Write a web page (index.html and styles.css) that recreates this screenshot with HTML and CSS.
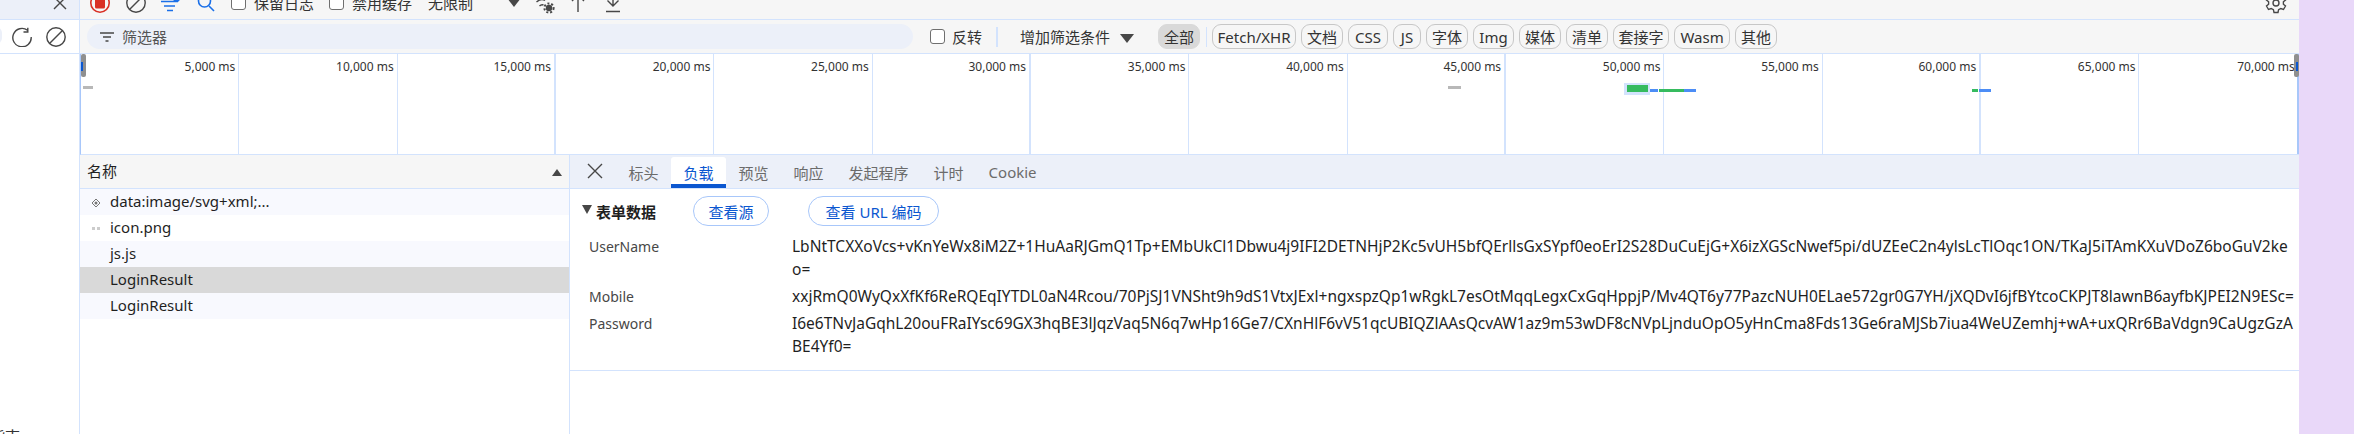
FILE: index.html
```html
<!DOCTYPE html>
<html lang="zh-CN">
<head>
<meta charset="utf-8">
<title>网络</title>
<link rel="stylesheet" href="styles.css">
</head>
<body>
<div class="app">
  <aside class="side">
    <div class="side-top">
      <svg class="side-close" width="16" height="16" viewBox="0 0 16 16"><path d="M2 2 14 14M14 2 2 14" class="st-dark"/></svg>
    </div>
    <div class="side-tools">
      <span class="side-pill"></span>
      <svg class="ic-reload" width="20" height="20" viewBox="0 0 20 20"><path d="M15.5 3.2A9.2 9.2 0 1 0 19.2 10M15.8 0.8V5H11.5" class="st-dark"/></svg>
      <svg class="ic-clear2" width="20" height="20" viewBox="0 0 20 20"><circle cx="10" cy="10" r="9.2" class="st-dark"/><path d="M3.5 16.5 16.5 3.5" class="st-dark"/></svg>
    </div>
    <div class="side-foot">指南</div>
  </aside>

  <main class="main">
    <div class="bar bar-one">
      <svg class="ic-record" width="20" height="20" viewBox="0 0 20 20"><circle cx="10" cy="10" r="9.2" class="st-red"/><rect x="5" y="4.5" width="10" height="11" rx="1.5" class="fill-red"/></svg>
      <svg class="ic-clear" width="20" height="20" viewBox="0 0 20 20"><circle cx="10" cy="10" r="9.2" class="st-dark"/><path d="M3.5 16.5 16.5 3.5" class="st-dark"/></svg>
      <svg class="ic-filter" width="20" height="20" viewBox="0 0 20 20"><path d="M0 8.500H17M3 13H14M6 17.500H12" class="st-bright"/><circle cx="15.500" cy="5.500" r="3.500" class="fill-bright"/></svg>
      <svg class="ic-search" width="18" height="20" viewBox="0 0 18 20"><circle cx="7.5" cy="8" r="6" class="st-bright"/><path d="M12 13 17 18" class="st-bright"/></svg>
      <span class="check check-a"></span><span class="lbl lbl-a">保留日志</span>
      <span class="check check-b"></span><span class="lbl lbl-b">禁用缓存</span>
      <span class="lbl lbl-c">无限制</span>
      <span class="tri tri-a"></span>
      <svg class="ic-wifi" width="22" height="22" viewBox="0 0 22 22"><path d="M0.500 6C5 2 10 2 14 5.500M3.500 10C7 7 10 7 12 8.500M6.500 14C8 12.500 9.500 12.500 10.500 13" class="st-dark"/><circle cx="16" cy="16" r="3.200" class="fill-dark"/><circle cx="16" cy="16" r="4.600" class="st-dash"/></svg>
      <svg class="ic-up" width="14" height="20" viewBox="0 0 14 20"><path d="M7 19V2M1 8 7 2 13 8" class="st-dark"/></svg>
      <svg class="ic-down" width="14" height="20" viewBox="0 0 14 20"><path d="M7 0V13M1.500 7.500 7 13 12.500 7.500M0 18.500H14" class="st-dark"/></svg>
      <svg class="ic-gear" width="22" height="22" viewBox="0 0 22 22"><path d="M9 1.500H13L13.600 4.300 15.800 5.500 18.500 4.500 20.500 8 18.400 9.800V12.200L20.500 14 18.500 17.500 15.800 16.500 13.600 17.700 13 20.500H9L8.400 17.700 6.200 16.500 3.500 17.500 1.500 14 3.600 12.200V9.800L1.500 8 3.500 4.500 6.200 5.500 8.400 4.300Z" class="st-dark"/><circle cx="11" cy="11" r="3" class="st-dark"/></svg>
    </div>

    <div class="bar bar-two">
      <div class="filter-input">
        <svg width="14" height="10" viewBox="0 0 14 10"><path d="M0 1H14M3 5H11M5.500 9H8.500" class="st-gray"/></svg>
        <span>筛选器</span>
      </div>
      <span class="check check-c"></span><span class="lbl lbl-d">反转</span>
      <span class="vsep vsep-a"></span>
      <span class="lbl lbl-e">增加筛选条件</span>
      <span class="tri tri-b"></span>
      <span class="chip chip-on">全部</span>
      <span class="vsep vsep-b"></span>
      <div class="chips">
        <span class="chip chip-fetch">Fetch/XHR</span>
        <span class="chip">文档</span>
        <span class="chip chip-css">CSS</span>
        <span class="chip chip-js">JS</span>
        <span class="chip">字体</span>
        <span class="chip chip-img">Img</span>
        <span class="chip">媒体</span>
        <span class="chip">清单</span>
        <span class="chip chip-ws">套接字</span>
        <span class="chip chip-wasm">Wasm</span>
        <span class="chip">其他</span>
      </div>
    </div>

    <div class="overview">
      <div class="tick"><span>5,000 ms</span></div>
      <div class="tick"><span>10,000 ms</span></div>
      <div class="tick"><span>15,000 ms</span></div>
      <div class="tick"><span>20,000 ms</span></div>
      <div class="tick"><span>25,000 ms</span></div>
      <div class="tick"><span>30,000 ms</span></div>
      <div class="tick"><span>35,000 ms</span></div>
      <div class="tick"><span>40,000 ms</span></div>
      <div class="tick"><span>45,000 ms</span></div>
      <div class="tick"><span>50,000 ms</span></div>
      <div class="tick"><span>55,000 ms</span></div>
      <div class="tick"><span>60,000 ms</span></div>
      <div class="tick"><span>65,000 ms</span></div>
      <div class="tick"><span>70,000 ms</span></div>
      <i class="handle handle-l"></i>
      <i class="handle handle-r"></i>
      <i class="seg dash-a"></i>
      <i class="seg dash-b"></i>
      <i class="seg halo"></i>
      <i class="seg green-big"></i>
      <i class="seg blue-a"></i>
      <i class="seg green-a"></i>
      <i class="seg blue-b"></i>
      <i class="seg green-b"></i>
      <i class="seg blue-c"></i>
    </div>

    <div class="split">
      <section class="reqs">
        <header class="reqs-head"><span>名称</span><span class="tri-up"></span></header>
        <div class="req req-odd">
          <svg class="req-ic" width="8" height="8" viewBox="0 0 8 8"><path d="M0 4 4 0 8 4 4 8Z" class="st-thin"/><circle cx="4" cy="4" r="1.500" class="fill-gray"/></svg>
          <span>data:image/svg+xml;...</span>
        </div>
        <div class="req">
          <svg class="req-ic" width="8" height="4" viewBox="0 0 8 4"><rect width="3" height="3" class="fill-light"/><rect x="5" width="3" height="3" class="fill-light"/></svg>
          <span>icon.png</span>
        </div>
        <div class="req req-odd"><span class="req-noic">js.js</span></div>
        <div class="req req-sel"><span class="req-noic">LoginResult</span></div>
        <div class="req req-odd"><span class="req-noic">LoginResult</span></div>
      </section>

      <section class="detail">
        <nav class="tabs">
          <svg class="tabs-close" width="16" height="16" viewBox="0 0 16 16"><path d="M1 1 15 15M15 1 1 15" class="st-dark"/></svg>
          <span class="tab">标头</span>
          <span class="tab tab-on">负载</span>
          <span class="tab">预览</span>
          <span class="tab">响应</span>
          <span class="tab">发起程序</span>
          <span class="tab">计时</span>
          <span class="tab">Cookie</span>
        </nav>
        <div class="form">
          <div class="form-head">
            <span class="tri tri-c"></span>
            <strong>表单数据</strong>
            <span class="pill pill-a">查看源</span>
            <span class="pill pill-b">查看 URL 编码</span>
          </div>
          <div class="kv">
            <span class="k">UserName</span>
            <span class="v">LbNtTCXXoVcs+vKnYeWx8iM2Z+1HuAaRJGmQ1Tp+EMbUkCl1Dbwu4j9IFI2DETNHjP2Kc5vUH5bfQErllsGxSYpf0eoErI2S28DuCuEjG+X6izXGScNwef5pi/dUZEeC2n4ylsLcTlOqc1ON/TKaJ5iTAmKXuVDoZ6boGuV2ke<br>o=</span>
          </div>
          <div class="kv">
            <span class="k">Mobile</span>
            <span class="v">xxjRmQ0WyQxXfKf6ReRQEqIYTDL0aN4Rcou/70PjSJ1VNSht9h9dS1VtxJExl+ngxspzQp1wRgkL7esOtMqqLegxCxGqHppjP/Mv4QT6y77PazcNUH0ELae572gr0G7YH/jXQDvI6jfBYtcoCKPJT8lawnB6ayfbKJPEI2N9ESc=</span>
          </div>
          <div class="kv">
            <span class="k">Password</span>
            <span class="v">I6e6TNvJaGqhL20ouFRaIYsc69GX3hqBE3lJqzVaq5N6q7wHp16Ge7/CXnHlF6vV51qcUBIQZlAAsQcvAW1az9m53wDF8cNVpLjnduOpO5yHnCma8Fds13Ge6raMJSb7iua4WeUZemhj+wA+uxQRr6BaVdgn9CaUgzGzA<br>BE4Yf0=</span>
          </div>
        </div>
      </section>
    </div>
  </main>
</div>
</body>
</html>
```
FILE: styles.css
```css
* { box-sizing: border-box; }
html, body { margin: 0; height: 434px; overflow: hidden; }
body {
  background: #e9d8f9;
  color: #1f1f1f;
  font-family: "Noto Sans", "Noto Sans CJK SC", sans-serif;
  font-size: 14px;
}
.app { display: flex; width: 2299px; height: 448px; margin-top: -14px; background: #fff; }

/* stroke helpers */
svg { flex: none; display: block; fill: none; }
.st-dark { stroke: #474747; stroke-width: 1.4; fill: none; }
.st-dash { stroke: #474747; stroke-width: 2; stroke-dasharray: 2 1.900; fill: none; }
.st-red { stroke: #d93025; stroke-width: 1.6; fill: none; }
.st-bright { stroke: #1a6fe8; stroke-width: 1.6; fill: none; }
.st-gray { stroke: #474747; stroke-width: 1.5; fill: none; }
.st-thin { stroke: #777; stroke-width: 1; fill: none; }
.fill-red { fill: #d93025; }
.fill-bright { fill: #1a6fe8; }
.fill-dark { fill: #474747; }
.fill-gray { fill: #777; }
.fill-light { fill: #ccc; }

/* left gutter */
.side { width: 80px; flex: none; display: flex; flex-direction: column; border-right: 1px solid #d3e3fd; }
.side-top { height: 34px; background: #ecf0f9; border-bottom: 1px solid #d3e3fd; padding: 9px 0 0 52px; }
.side-tools { height: 34px; background: #fff; border-bottom: 1px solid #d3e3fd; display: flex; align-items: center; padding-left: 12px; position: relative; }
.side-pill { position: absolute; left: -10px; top: 7px; width: 12px; height: 17px; border-radius: 8px; background: #ecf0f9; }
.ic-clear2 { margin-left: 14px; }
.side-foot { margin-top: auto; margin-left: -10px; margin-bottom: -12px; font-size: 15px; line-height: 20px; white-space: nowrap; color: #333; }

.main { flex: 1; min-width: 0; display: flex; flex-direction: column; }

/* toolbars */
.bar { display: flex; align-items: center; height: 34px; flex: none; background: #f6f6f6; border-bottom: 1px solid #d3e3fd; font-size: 15px; white-space: nowrap; color: #333; }
.bar-one { padding-left: 10px; }
.ic-clear { margin-left: 16px; }
.ic-filter { margin-left: 15px; }
.ic-search { margin-left: 16px; }
.check { width: 15px; height: 15px; flex: none; border: 1.5px solid #6f6f6f; border-radius: 3px; background: #fff; }
.check-a { margin-left: 16px; }
.lbl-a { margin-left: 8px; }
.check-b { margin-left: 15px; }
.lbl-b { margin-left: 8px; }
.lbl-c { margin-left: 16px; }
.tri { width: 0; height: 0; flex: none; border-left: 7px solid transparent; border-right: 7px solid transparent; border-top: 9px solid #474747; }
.tri-a { margin-left: 34px; }
.ic-wifi { margin-left: 12px; }
.ic-up { margin-left: 16px; }
.ic-down { margin-left: 21px; }
.ic-gear { margin-left: auto; margin-right: 12px; }

.filter-input { width: 826px; height: 25px; margin-left: 7px; padding-left: 13px; display: flex; align-items: center; gap: 8px; background: #ecf0f9; border-radius: 12.500px; color: #555; flex: none; }
.check-c { margin-left: 17px; }
.lbl-d { margin-left: 7px; }
.vsep { width: 1px; height: 20px; flex: none; background: #d3e3fd; }
.vsep-a { margin-left: 14px; width: 2px; }
.lbl-e { margin-left: 22px; }
.tri-b { margin-left: 10px; margin-top: 3px; }
.chip { height: 25px; width: 42px; flex: none; display: flex; align-items: center; justify-content: center; border: 1px solid #c7c7c7; border-radius: 9px; background: #f6f6f6; font-size: 15px; }
.chip-on { margin-left: 24px; background: #d9d9d9; border-color: #d9d9d9; }
.vsep-b { margin-left: 6px; }
.chips { display: flex; gap: 5px; margin-left: 5px; }
.chip-fetch { width: 84px; }
.chip-css { width: 40px; }
.chip-js { width: 28px; }
.chip-img { width: 41px; }
.chip-ws { width: 56px; }
.chip-wasm { width: 56px; }

/* overview */
.overview { position: relative; height: 101px; flex: none; display: flex; background: #fff; border-bottom: 1px solid #d3e3fd; border-left: 1px solid #a8c7fa; }
.tick { width: 158.350px; flex: none; border-right: 1px solid #d3e3fd; text-align: right; padding: 4px 3px 0 0; font-size: 12px; line-height: 18px; color: #333; }
.tick:nth-child(3n) { border-right-width: 2px; }
.tick:last-of-type { border-right: 0; }
.overview::after { content: ""; position: absolute; right: 0; top: 0; bottom: 0; width: 2px; background: #a8c7fa; }
.handle { position: absolute; top: 0; width: 5px; height: 23px; background: #8f8f8f; border-radius: 2px; z-index: 1; }
.handle::after { content: ""; position: absolute; top: 8px; width: 2px; height: 9px; background: #0b57d0; }
.handle-l { left: 0; }
.handle-r { right: 0; }
.handle-r::after { left: 2px; }
.seg { position: absolute; display: block; }
.dash-a { left: 2px; top: 32px; width: 10px; height: 3px; background: #b8b8b8; }
.dash-b { left: 1367px; top: 32px; width: 13px; height: 3px; background: #b8b8b8; }
.halo { left: 1543px; top: 29px; width: 26px; height: 12px; background: #d3e3fd; }
.green-big { left: 1546px; top: 31px; width: 21px; height: 7px; background: #36bb5f; }
.blue-a { left: 1569px; top: 35px; width: 8px; height: 3px; background: #4c8df6; }
.green-a { left: 1578px; top: 35px; width: 25px; height: 3px; background: #36bb5f; }
.blue-b { left: 1603px; top: 35px; width: 12px; height: 3px; background: #4c8df6; }
.green-b { left: 1891px; top: 35px; width: 6px; height: 3px; background: #36bb5f; }
.blue-c { left: 1898px; top: 35px; width: 12px; height: 3px; background: #4c8df6; }

/* split */
.split { flex: 1; display: flex; min-height: 0; }
.reqs { width: 490px; flex: none; border-right: 1px solid #d3e3fd; font-size: 15px; }
.reqs-head { height: 34px; display: flex; align-items: center; justify-content: space-between; padding: 0 7px 2px 7px; background: #f6f6f6; border-bottom: 1px solid #d3e3fd; }
.tri-up { width: 0; height: 0; margin-top: 3px; border-left: 5px solid transparent; border-right: 5px solid transparent; border-bottom: 7px solid #474747; }
.req { height: 26px; display: flex; align-items: center; padding: 0 0 2px 12px; gap: 10px; background: #fff; white-space: nowrap; }
.req-odd { background: #f8f9fe; }
.req-sel { background: #d9d9d9; }
.req-ic { margin-top: 4px; }
.req-noic { margin-left: 18px; }

.detail { flex: 1; min-width: 0; }
.tabs { height: 34px; display: flex; align-items: flex-end; background: #ecf0f9; border-bottom: 1px solid #d3e3fd; font-size: 15px; color: #6b6b6b; }
.tabs-close { margin: 0 13px 9px 17px; }
.tab { height: 31px; padding: 5px 12.500px 0; white-space: nowrap; }
.tab-on { background: #fff; color: #0b57d0; border-bottom: 4px solid #0b57d0; border-radius: 3px 3px 0 0; }
.form { padding: 7px 0 12px 0; border-bottom: 1px solid #d3e3fd; background: #fff; font-size: 14px; }
.form-head { display: flex; align-items: center; height: 30px; padding-left: 12px; }
.tri-c { border-left-width: 5px; border-right-width: 5px; border-top-width: 9px; margin-right: 4px; margin-top: -3px; }
.form-head strong { font-size: 15px; font-weight: 700; white-space: nowrap; }
.pill { height: 30px; display: flex; align-items: center; justify-content: center; flex: none; border: 1px solid #a8c7fa; border-radius: 15px; color: #0b57d0; font-size: 15px; white-space: nowrap; }
.pill-a { width: 76px; margin-left: 37px; }
.pill-b { width: 131px; margin-left: 39px; }
.kv { display: flex; margin-top: 4px; line-height: 23px; }
.form-head + .kv { margin-top: 9px; }
.k { width: 222px; flex: none; padding-left: 19px; color: #474747; }
.v { white-space: nowrap; color: #1f1f1f; font-size: 15.500px; }
```
